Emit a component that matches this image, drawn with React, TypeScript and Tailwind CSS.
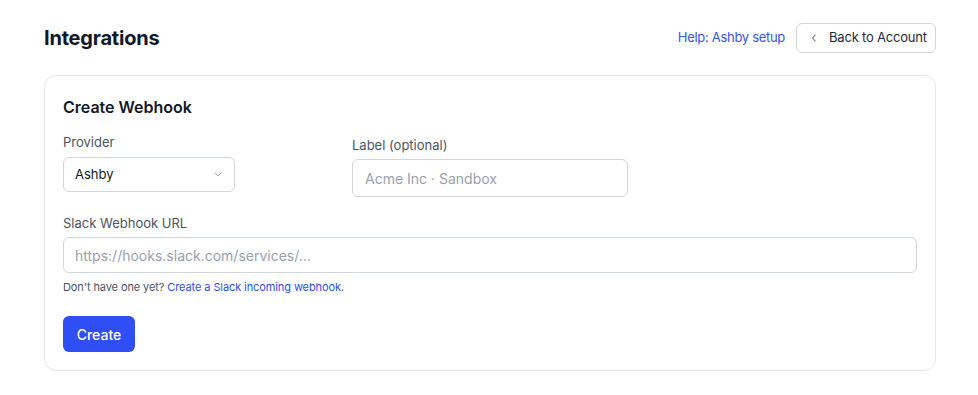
import React from "react";

function ChevronDown() {
  return (
    <svg width="8" height="5" viewBox="0 0 8 5" fill="none" className="text-gray-400">
      <path d="M1 1L4 3.8L7 1" stroke="currentColor" strokeWidth="1" strokeLinecap="round" strokeLinejoin="round" />
    </svg>
  );
}

function ChevronLeft() {
  return (
    <svg width="6" height="10" viewBox="0 0 6 10" fill="none" className="text-gray-500">
      <path d="M4.2 2L1.5 5L4.2 8" stroke="currentColor" strokeWidth="1.1" strokeLinecap="round" strokeLinejoin="round" />
    </svg>
  );
}

export default function App() {
  return (
    <div className="min-h-[395px] w-full bg-white pl-[44px] pr-[42px] pt-[23px] font-['Inter',_'Noto_Sans',_sans-serif] text-gray-900">
      <div className="flex h-[30px] items-center justify-between">
        <h1 className="text-[20px] font-bold leading-[28px] tracking-[-0.2px] text-[#111827]">Integrations</h1>
        <div className="flex items-center gap-[11px]">
          <a className="text-[13px] tracking-[-0.3px] text-[#3656f0]">Help: Ashby setup</a>
          <button className="flex h-[30px] w-[140px] items-center gap-[12px] rounded-md border border-gray-300 bg-white pl-[14px] text-[13px] tracking-[-0.2px] text-gray-800">
            <ChevronLeft />
            <span>Back to Account</span>
          </button>
        </div>
      </div>

      <div className="mt-[22px] rounded-xl border border-gray-200 px-[18px] pb-[18px] pt-[19px]">
        <h2 className="text-[16px] font-semibold leading-[24px] text-[#111827]">Create Webhook</h2>

        <div className="mt-[13px] flex items-start gap-[117px]">
          <div className="flex flex-col">
            <label className="mb-[5px] text-[13px] leading-[20px] text-gray-600">Provider</label>
            <div className="flex h-[35px] w-[172px] items-center justify-between rounded-md border border-gray-300 bg-white pl-[11px] pr-[12px] text-[13px] text-gray-900">
              <span>Ashby</span>
              <ChevronDown />
            </div>
          </div>
          <div className="flex flex-col pt-[3px]">
            <label className="mb-[4px] text-[13px] leading-[20px] text-gray-600">Label (optional)</label>
            <input
              placeholder="Acme Inc · Sandbox"
              className="h-[38px] w-[276px] rounded-md border border-gray-300 bg-white px-[12px] text-[14px] text-gray-900 outline-none placeholder:text-gray-400"
            />
          </div>
        </div>

        <div className="mt-[16px] flex flex-col">
          <label className="mb-[4px] text-[13px] leading-[20px] text-gray-600">Slack Webhook URL</label>
          <input
            placeholder="https://hooks.slack.com/services/..."
            className="h-[36px] w-full rounded-md border border-gray-300 bg-white px-[11px] text-[14px] text-gray-900 outline-none placeholder:text-gray-400"
          />
          <p className="mt-[6px] text-[11px] leading-[16px] tracking-[-0.1px] text-gray-600">
            Don't have one yet? <a className="text-[#2f4ef5]">Create a Slack incoming webhook</a>.
          </p>
        </div>

        <button className="mt-[21px] flex h-[36px] w-[72px] items-center justify-center rounded-md bg-[#2f4ef5] text-[14px] font-medium text-white">
          Create
        </button>
      </div>
    </div>
  );
}
